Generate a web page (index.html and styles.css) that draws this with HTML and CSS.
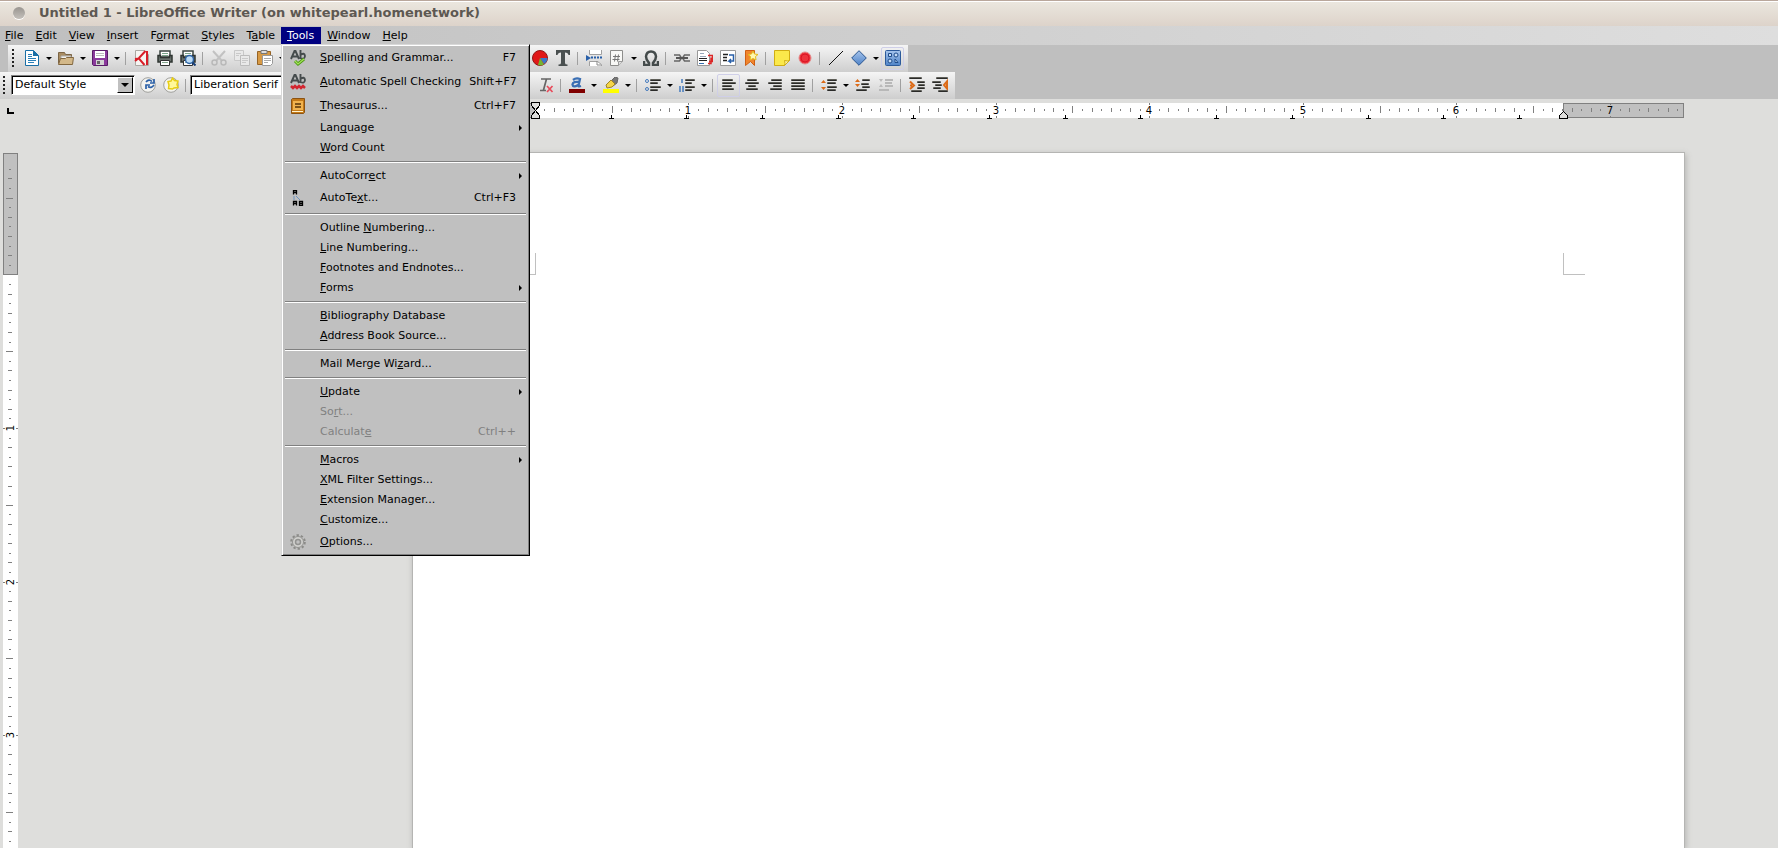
FILE: index.html
```
<!DOCTYPE html>
<html lang="en">
<head>
<meta charset="utf-8">
<title>Untitled 1 - LibreOffice Writer</title>
<link rel="stylesheet" href="styles.css">
</head>
<body>
<svg class="defs" aria-hidden="true">
  <defs>
    <linearGradient id="bar" x1="0" y1="0" x2="0" y2="1"><stop offset="0" stop-color="#77776f"/><stop offset="1" stop-color="#111"/></linearGradient>
    <linearGradient id="blue" x1="0" y1="0" x2="0" y2="1"><stop offset="0" stop-color="#a6c4ec"/><stop offset="1" stop-color="#4f83c8"/></linearGradient>
  </defs>
  <symbol id="new" viewBox="0 0 16 16"><path d="M1.500 .5h8l5 5v10h-13z" fill="#fff" stroke="#1a6fa6"/><path d="M9 0l6 6H9z" fill="#1a6fa6"/><path d="M4 4.500h4M4 6.500h4M4 8.500h8M4 10.500h8M4 12.500h6" stroke="#2a80b8"/></symbol>
  <symbol id="open" viewBox="0 0 16 16"><path d="M.5 13.500v-11h6l1 2h6v3" fill="#a98d63" stroke="#7c6545"/><path d="M3 6h10v5H3z" fill="#f4f2ec" stroke="#aaa"/><path d="M.5 14.500l2-6h5l1-1h7l-1 7z" fill="#d3b889" stroke="#82673f"/></symbol>
  <symbol id="save" viewBox="0 0 16 16"><path d="M.5.500h15v15H1.500l-1-1z" fill="#8b3a9c" stroke="#591c68"/><path d="M3 1h10v7H3z" fill="#fff"/><path d="M4 3.500h8M4 5.500h8" stroke="#bbb"/><path d="M4 10h8v5H4z" fill="#d4d4d4"/><path d="M5 11h3v3H5z" fill="#666"/></symbol>
  <symbol id="pdf" viewBox="0 0 16 16"><path d="M1.500 .5h9l4 4v11h-13z" fill="#f7f5f2" stroke="#aaa7a2"/><path d="M13 1v14M11.500 1L5 8l-4 3M10.500 15L5 8.500 1 9" fill="none" stroke="#d81e28" stroke-width="2"/></symbol>
  <symbol id="print" viewBox="0 0 16 16"><path d="M3 1h10v6H3z" fill="#fff" stroke="#3b4541" stroke-width="1.500"/><path d="M5 3.500h6M5 5.500h6" stroke="#7aa48a"/><path d="M1 5.500h2.500v2h9v-2H15v6.500H1z" fill="#68706c" stroke="#2e3431" stroke-width="1.500"/><path d="M3.500 10.500h9v5h-9z" fill="#fff" stroke="#333"/><path d="M5 12.500h6" stroke="#86a890"/></symbol>
  <symbol id="preview" viewBox="0 0 16 16"><use href="#print"/><circle cx="9.500" cy="9.500" r="4" fill="#bcdcf5" stroke="#2c62a5" stroke-width="1.500"/><path d="M12.500 12.500l3 3" stroke="#173e76" stroke-width="2"/></symbol>
  <symbol id="cut" viewBox="0 0 16 16"><path d="M2 1l9 10M14 1L5 11" stroke="#c2c2c2" stroke-width="2"/><circle cx="3.500" cy="12.500" r="2.500" fill="none" stroke="#b9b9b9" stroke-width="1.500"/><circle cx="12.500" cy="12.500" r="2.500" fill="none" stroke="#b9b9b9" stroke-width="1.500"/></symbol>
  <symbol id="copy" viewBox="0 0 16 16"><path d="M.5.500h9v10h-9z" fill="#e9e9e9" stroke="#c8c8c8"/><path d="M6.500 5.500h9v10h-9z" fill="#e9e9e9" stroke="#bcbcbc"/><path d="M2 3.500h5M2 5.500h3M8 8.500h6M8 10.500h6M8 12.500h4" stroke="#c9c9c9"/></symbol>
  <symbol id="paste" viewBox="0 0 16 16"><path d="M.5 1.500h13v13H.5z" fill="#d79a45" stroke="#976426"/><path d="M4 .5h6v3H4z" fill="#ddd" stroke="#777"/><path d="M5.500 5.500h10v8l-2 2h-8z" fill="#fff" stroke="#999"/><path d="M7 8.500h7M7 10.500h7M7 12.500h4" stroke="#aaa"/></symbol>
  <symbol id="chart" viewBox="0 0 16 16"><circle cx="8" cy="8" r="7.500" fill="#e01818" stroke="#8f1717"/><path d="M8 8h7.500A7.500 7.500 0 0 1 12 14z" fill="#3c78c8"/><path d="M8 8l4 6.500a8 8 0 0 1-6 .5z" fill="#74b531"/></symbol>
  <symbol id="textbox" viewBox="0 0 16 16"><path d="M1 0h14v5h-1.500Q13 2.500 10 2.500V13q0 1.500 2.500 1.500V16h-9v-1.500Q6 14.500 6 13V2.500Q3 2.500 2.500 5H1z" fill="#4a5050"/></symbol>
  <symbol id="pagebreak" viewBox="0 0 16 16"><path d="M3.500 0v4.500h12V0M3.500 16v-4.500h8l4 3V16" fill="#fff" stroke="#a0a0a0"/><path d="M11 11v4h4" fill="none" stroke="#888"/><path d="M5 7.500h11" stroke="#285fa8" stroke-width="2" stroke-dasharray="2 1"/><path d="M0 5l5 3-5 3z" fill="#285fa8"/></symbol>
  <symbol id="field" viewBox="0 0 16 16"><path d="M1.500.500h12v11l-4 4h-8z" fill="#f8f8f6" stroke="#8d8d8b"/><path d="M9.500 15.500v-4h4" fill="#ddd" stroke="#999"/><path d="M6.500 4.500l-1 7M9.500 4.500l-1 7M4 6.500h7M3.500 9.500h7" stroke="#777"/></symbol>
  <symbol id="omega" viewBox="0 0 16 16"><path d="M1 11v4h5v-2Q3 10 3 6.500 3.500 1.500 8 1.500t5 5Q13 10 10 13v2h5v-4" fill="none" stroke="#444b4b" stroke-width="2.500"/></symbol>
  <symbol id="link" viewBox="0 0 16 16"><path d="M0 5h5.500l2 3-2 3H0M16 5h-5.500l-2 3 2 3H16" fill="none" stroke="#666" stroke-width="1.500"/><path d="M2 8h12" stroke="#555" stroke-width="2"/></symbol>
  <symbol id="footnote" viewBox="0 0 16 16"><path d="M.5.500h9l3 3v12H.5z" fill="#fff" stroke="#999"/><path d="M3 3.500h4M3 6.500h6" stroke="#9ab"/><path d="M2 8.500h8M2 10.500h8" stroke="#222"/><path d="M2 13.500h5" stroke="#356eb0"/><path d="M11 5.500h4.500v6H12M11 13.500h3v-6" fill="none" stroke="#dc2727" stroke-width="1.500"/></symbol>
  <symbol id="crossref" viewBox="0 0 16 16"><path d="M.5.500h15v15H.5z" fill="#fff" stroke="#999"/><path d="M3 4.500h5M3 7.500h4M3 10.500h4" stroke="#222" stroke-width="1.500"/><path d="M9 5h4.500v6H9l2-2m-2 2l2 2" fill="none" stroke="#285fa8" stroke-width="1.500"/></symbol>
  <symbol id="bookmark" viewBox="0 0 16 16"><path d="M2.500.500h9v15l-4-4-5 4z" fill="#f0852d" stroke="#cf5f13"/><path d="M10 1l1.500 3 3.500.5-2.500 2 .5 3.500-3-1.500L7 10l.5-3.500-2.500-2L8.500 4z" fill="#fff7b0" stroke="#e3bb1b"/></symbol>
  <symbol id="note" viewBox="0 0 16 16"><path d="M.5.500h15v10l-5 5H.5z" fill="#fbe94b" stroke="#d0ad13"/><path d="M10.500 15.500q1-2 0-5 3 1 5 0z" fill="#fff6a6" stroke="#d0ad13"/></symbol>
  <symbol id="record" viewBox="0 0 16 16"><circle cx="8" cy="8" r="6" fill="#ed333b" stroke="#e58b8b"/><circle cx="8" cy="8" r="4" fill="none" stroke="#d91525"/></symbol>
  <symbol id="line" viewBox="0 0 16 16"><path d="M1 15L15 1" stroke="#111"/></symbol>
  <symbol id="diamond" viewBox="0 0 16 16"><path d="M8 .7L15.300 8 8 15.300.7 8z" fill="url(#blue)" stroke="#28548f"/></symbol>
  <symbol id="draw" viewBox="0 0 16 16"><rect x=".5" y=".5" width="15" height="15" rx="1" fill="url(#blue)" stroke="#2c5a9b"/><path d="M3.500 3.500h3v3h-3zM10 12.500V9l3 3.500z" fill="#c5dbf5" stroke="#1f4c8b"/><circle cx="11" cy="5" r="2" fill="#c5dbf5" stroke="#1f4c8b"/><circle cx="5" cy="11" r="2" fill="#c5dbf5" stroke="#1f4c8b"/></symbol>
  <symbol id="refresh" viewBox="0 0 16 16"><circle cx="8" cy="8" r="7.300" fill="#f3f3f0" stroke="#a0a09c"/><path d="M6 5q3-3.500 6-.5m2-2.500v4h-4M14 8q-3 4-6 1.500M6 12V8h4" fill="none" stroke="#2b60a8" stroke-width="1.700"/></symbol>
  <symbol id="newstyle" viewBox="0 0 16 16"><circle cx="8" cy="8" r="7.300" fill="#f3f3f0" stroke="#a0a09c"/><path d="M9.500 1l2 2.500L15 4l-1 3.500 1 3-4 .5-1.500 1-4-.5L6 8 5 4.500 8 4z" fill="#fff89a" stroke="#e7cd12" stroke-width="1.500"/></symbol>
  <symbol id="clear" viewBox="0 0 16 16"><path d="M3 2h10M8.500 2L5.500 13M2 13.500h6" stroke="#666" stroke-width="1.700"/><path d="M9 9l5.500 6M14.500 9L9 15" stroke="#e84a5a" stroke-width="1.700"/></symbol>
  <symbol id="fontcolor" viewBox="0 0 16 16"><path d="M4 3q3-2.500 7-1L9.500 8.500q-.5 1.500 2.500.5M10.500 5Q4 4 3.500 7.500 4 11 9 8" fill="none" stroke="#3a6fb4" stroke-width="2.300"/><path d="M0 12h16v4H0z" fill="#800000"/></symbol>
  <symbol id="highlight" viewBox="0 0 16 16"><path d="M12 0l3 1-1 5-4 3-3-4z" fill="#777" stroke="#666"/><path d="M8 3l4 4-3 3-5 1-1-3z" fill="#f5d548" stroke="#9e8324"/><path d="M0 12h16v4H0z" fill="#ff0"/></symbol>
  <symbol id="bullets" viewBox="0 0 16 16"><g fill="none" stroke="#4379bd"><circle cx="2" cy="4" r="1.500"/><circle cx="2" cy="12" r="1.500"/></g><g fill="url(#bar)"><rect x="5" y="2" width="11" height="2" rx="1"/><rect x="5" y="5" width="8" height="2" rx="1"/><rect x="5" y="9" width="11" height="2" rx="1"/><rect x="5" y="12" width="8" height="2" rx="1"/></g></symbol>
  <symbol id="numbers" viewBox="0 0 16 16"><path d="M3 2v4M1 9v6M4 9v6" stroke="#4379bd" stroke-width="1.500"/><g fill="url(#bar)"><rect x="6" y="2" width="10" height="2" rx="1"/><rect x="6" y="5" width="7" height="2" rx="1"/><rect x="6" y="9" width="10" height="2" rx="1"/><rect x="6" y="12" width="7" height="2" rx="1"/></g></symbol>
  <symbol id="left" viewBox="0 0 16 16"><g fill="url(#bar)"><rect x="1" y="2" width="11" height="2" rx="1"/><rect x="1" y="5" width="14" height="2" rx="1"/><rect x="1" y="8" width="10" height="2" rx="1"/><rect x="1" y="11" width="12" height="2" rx="1"/></g></symbol>
  <symbol id="center" viewBox="0 0 16 16"><g fill="url(#bar)"><rect x="3" y="2" width="10" height="2" rx="1"/><rect x="1" y="5" width="14" height="2" rx="1"/><rect x="4" y="8" width="8" height="2" rx="1"/><rect x="2" y="11" width="12" height="2" rx="1"/></g></symbol>
  <symbol id="right" viewBox="0 0 16 16"><g fill="url(#bar)"><rect x="4" y="2" width="11" height="2" rx="1"/><rect x="1" y="5" width="14" height="2" rx="1"/><rect x="6" y="8" width="9" height="2" rx="1"/><rect x="3" y="11" width="12" height="2" rx="1"/></g></symbol>
  <symbol id="justify" viewBox="0 0 16 16"><g fill="url(#bar)"><rect x="1" y="2" width="14" height="2" rx="1"/><rect x="1" y="5" width="14" height="2" rx="1"/><rect x="1" y="8" width="14" height="2" rx="1"/><rect x="1" y="11" width="14" height="2" rx="1"/></g></symbol>
  <symbol id="spacing" viewBox="0 0 16 16"><path d="M0 6l2.500-3L5 6zM0 10l2.500 3L5 10z" fill="#dc6b18"/><g fill="url(#bar)"><rect x="6" y="2" width="10" height="2" rx="1"/><rect x="6" y="5" width="9" height="2" rx="1"/><rect x="6" y="9" width="10" height="2" rx="1"/><rect x="6" y="12" width="9" height="2" rx="1"/></g></symbol>
  <symbol id="paraup" viewBox="0 0 16 16"><path d="M0 5l2.500-3L5 5zM0 7l2.500 3L5 7z" fill="#dc6b18"/><g fill="url(#bar)"><rect x="7" y="2" width="8" height="2" rx="1"/><rect x="6" y="6" width="8" height="2" rx="1"/><rect x="1" y="12" width="11" height="2" rx="1"/><rect x="7" y="9" width="8" height="2" rx="1"/></g></symbol>
  <symbol id="paradown" viewBox="0 0 16 16"><path d="M1 2h4L3 5zM1 10h4L3 7z" fill="#bbb"/><g fill="#b8b8b8"><rect x="7" y="2" width="8" height="2"/><rect x="7" y="5" width="7" height="2"/><rect x="7" y="8" width="8" height="2"/><rect x="1" y="12" width="10" height="2"/></g></symbol>
  <symbol id="indent" viewBox="0 0 16 16"><path d="M1 4.500l4 4L1 12M1 8.500h2" fill="none" stroke="#dc6b18" stroke-width="2"/><g fill="url(#bar)"><rect x="0" y="0" width="13" height="2" rx="1"/><rect x="8" y="4" width="8" height="2" rx="1"/><rect x="9" y="7" width="7" height="2" rx="1"/><rect x="8" y="10" width="8" height="2" rx="1"/><rect x="2" y="13" width="11" height="2" rx="1"/></g></symbol>
  <symbol id="outdent" viewBox="0 0 16 16"><path d="M15 4.500L12 8l3 3.500z" fill="#fff" stroke="#dc6b18" stroke-width="2"/><g fill="url(#bar)"><rect x="4" y="0" width="12" height="2" rx="1"/><rect x="0" y="4" width="9" height="2" rx="1"/><rect x="3" y="7" width="7" height="2" rx="1"/><rect x="1" y="10" width="8" height="2" rx="1"/><rect x="6" y="13" width="10" height="2" rx="1"/></g></symbol>
  <symbol id="check" viewBox="0 0 16 16"><path d="M1 9L4.500 1h1L9 9M2.500 6.500h5M10.500 0v9M10.500 5q4-3 4.500 1-.5 4-4.500 2" fill="none" stroke="#454b4c" stroke-width="1.900"/><path d="M5 11l3 3L14 9" fill="none" stroke="#4d9a12" stroke-width="3"/><path d="M5 11l3 3 6-5" fill="none" stroke="#a5e35c" stroke-width="1.200"/></symbol>
  <symbol id="autospell" viewBox="0 0 16 16"><path d="M1 9L4.500 1h1L9 9M2.500 6.500h5M10.500 0v9M10.500 5q4-3 4.500 1-.5 4-4.500 2" fill="none" stroke="#454b4c" stroke-width="1.900"/><path d="M1 12l2 2 2-2 2 2 2-2 2 2 2-2 2 2" fill="none" stroke="#d32630" stroke-width="2.500"/></symbol>
  <symbol id="book" viewBox="0 0 16 16"><path d="M1.500 1.500l1-1h12v14l-1 1h-12z" fill="#c47a18" stroke="#8c5312"/><path d="M3 3h10v9H3z" fill="#f1b34f"/><path d="M5 6h6M5 9h6" stroke="#583408" stroke-width="1.500"/><path d="M2 13.500h11" stroke="#fff3cf"/></symbol>
  <symbol id="autotext" viewBox="0 0 16 16"><path d="M3.500 4.500V.5h3v4M3.500 2.500h3M3.500 15.500v-4h3v4M3.500 13.500h3M9.500 11.500v4h3v-4zM9.500 13.500h3" fill="none" stroke="#000" stroke-width="1.300"/><path d="M4 6v4M6 6l4 4" stroke="#6f94c0"/></symbol>
  <symbol id="gear" viewBox="0 0 16 16"><circle cx="8" cy="8" r="6.800" fill="none" stroke="#8b8b88" stroke-width="2" stroke-dasharray="2.340 2"/><circle cx="8" cy="8" r="5.500" fill="#d0d0cd" stroke="#929290"/><circle cx="8" cy="8" r="2.500" fill="#c0c0c0" stroke="#929290" stroke-width="1.500"/></symbol>
</svg>

<header class="titlebar"><span class="window-dot"></span><h1>Untitled 1 - LibreOffice Writer (on whitepearl.homenetwork)</h1></header>

<nav class="menubar">
  <button><u>F</u>ile</button>
  <button><u>E</u>dit</button>
  <button><u>V</u>iew</button>
  <button><u>I</u>nsert</button>
  <button>F<u>o</u>rmat</button>
  <button><u>S</u>tyles</button>
  <button>T<u>a</u>ble</button>
  <div class="open-menu">
    <button class="active"><u>T</u>ools</button>
    <div class="menu" role="menu">
      <button class="tall"><svg><use href="#check"/></svg><span><u>S</u>pelling and Grammar...</span><kbd>F7</kbd></button>
      <button class="tall"><svg><use href="#autospell"/></svg><span><u>A</u>utomatic Spell Checking</span><kbd>Shift+F7</kbd></button>
      <button class="tall"><svg><use href="#book"/></svg><span><u>T</u>hesaurus...</span><kbd>Ctrl+F7</kbd></button>
      <button class="sub"><span>Lan<u>g</u>uage</span></button>
      <button><span><u>W</u>ord Count</span></button>
      <hr>
      <button class="sub"><span>AutoCorr<u>e</u>ct</span></button>
      <button class="tall"><svg><use href="#autotext"/></svg><span>AutoTe<u>x</u>t...</span><kbd>Ctrl+F3</kbd></button>
      <hr>
      <button><span>Outline <u>N</u>umbering...</span></button>
      <button><span><u>L</u>ine Numbering...</span></button>
      <button><span><u>F</u>ootnotes and Endnotes...</span></button>
      <button class="sub"><span><u>F</u>orms</span></button>
      <hr>
      <button><span><u>B</u>ibliography Database</span></button>
      <button><span><u>A</u>ddress Book Source...</span></button>
      <hr>
      <button><span>Mail Merge Wi<u>z</u>ard...</span></button>
      <hr>
      <button class="sub"><span><u>U</u>pdate</span></button>
      <button disabled><span>So<u>r</u>t...</span></button>
      <button disabled><span>Calculat<u>e</u></span><kbd>Ctrl++</kbd></button>
      <hr>
      <button class="sub"><span><u>M</u>acros</span></button>
      <button><span><u>X</u>ML Filter Settings...</span></button>
      <button><span><u>E</u>xtension Manager...</span></button>
      <button><span><u>C</u>ustomize...</span></button>
      <button class="tall"><svg><use href="#gear"/></svg><span><u>O</u>ptions...</span></button>
    </div>
  </div>
  <button><u>W</u>indow</button>
  <button><u>H</u>elp</button>
</nav>

<div class="toolbars">
  <div class="toolbar standard">
    <i class="grip"></i>
    <button class="tool" aria-label="New"><svg><use href="#new"/></svg></button><button class="drop" aria-label="New options"></button>
    <button class="tool" aria-label="Open"><svg><use href="#open"/></svg></button><button class="drop" aria-label="Open options"></button>
    <button class="tool" aria-label="Save"><svg><use href="#save"/></svg></button><button class="drop" aria-label="Save options"></button>
    <i class="sep"></i>
    <button class="tool" aria-label="Export as PDF"><svg><use href="#pdf"/></svg></button>
    <button class="tool" aria-label="Print"><svg><use href="#print"/></svg></button>
    <button class="tool" aria-label="Print preview"><svg><use href="#preview"/></svg></button>
    <i class="sep"></i>
    <button class="tool" aria-label="Cut"><svg><use href="#cut"/></svg></button>
    <button class="tool" aria-label="Copy"><svg><use href="#copy"/></svg></button>
    <button class="tool" aria-label="Paste"><svg><use href="#paste"/></svg></button><button class="drop" aria-label="Paste options"></button>
    <i class="space"></i>
    <button class="tool" aria-label="Chart"><svg><use href="#chart"/></svg></button>
    <button class="tool" aria-label="Text box"><svg><use href="#textbox"/></svg></button>
    <i class="sep"></i>
    <button class="tool" aria-label="Page break"><svg><use href="#pagebreak"/></svg></button>
    <button class="tool" aria-label="Field"><svg><use href="#field"/></svg></button><button class="drop" aria-label="Field options"></button>
    <button class="tool" aria-label="Special character"><svg><use href="#omega"/></svg></button>
    <i class="sep"></i>
    <button class="tool" aria-label="Hyperlink"><svg><use href="#link"/></svg></button>
    <button class="tool" aria-label="Footnote"><svg><use href="#footnote"/></svg></button>
    <button class="tool" aria-label="Cross-reference"><svg><use href="#crossref"/></svg></button>
    <button class="tool" aria-label="Bookmark"><svg><use href="#bookmark"/></svg></button>
    <i class="sep"></i>
    <button class="tool" aria-label="Comment"><svg><use href="#note"/></svg></button>
    <button class="tool" aria-label="Record changes"><svg><use href="#record"/></svg></button>
    <i class="sep"></i>
    <button class="tool" aria-label="Line"><svg><use href="#line"/></svg></button>
    <button class="tool" aria-label="Shapes"><svg><use href="#diamond"/></svg></button><button class="drop" aria-label="Shape options"></button>
    <button class="tool on" aria-label="Draw functions"><svg><use href="#draw"/></svg></button>
  </div>
  <div class="toolbar formatting">
    <i class="grip"></i>
    <div class="combo"><input value="Default Style" aria-label="Paragraph style"><button aria-label="Show styles"></button></div>
    <button class="tool" aria-label="Update style"><svg><use href="#refresh"/></svg></button>
    <button class="tool" aria-label="New style"><svg><use href="#newstyle"/></svg></button>
    <i class="sep"></i>
    <div class="combo font"><input value="Liberation Serif" aria-label="Font name"><button aria-label="Show fonts"></button></div>
    <i class="space"></i>
    <button class="tool" aria-label="Clear formatting"><svg><use href="#clear"/></svg></button>
    <i class="sep"></i>
    <button class="tool" aria-label="Font color"><svg><use href="#fontcolor"/></svg></button><button class="drop" aria-label="Font colors"></button>
    <button class="tool" aria-label="Highlighting"><svg><use href="#highlight"/></svg></button><button class="drop" aria-label="Highlight colors"></button>
    <i class="sep"></i>
    <button class="tool" aria-label="Bullets"><svg><use href="#bullets"/></svg></button><button class="drop" aria-label="Bullet styles"></button>
    <button class="tool" aria-label="Numbering"><svg><use href="#numbers"/></svg></button><button class="drop" aria-label="Numbering styles"></button>
    <i class="sep"></i>
    <button class="tool on" aria-label="Align left"><svg><use href="#left"/></svg></button>
    <button class="tool" aria-label="Center"><svg><use href="#center"/></svg></button>
    <button class="tool" aria-label="Align right"><svg><use href="#right"/></svg></button>
    <button class="tool" aria-label="Justify"><svg><use href="#justify"/></svg></button>
    <i class="sep"></i>
    <button class="tool" aria-label="Line spacing"><svg><use href="#spacing"/></svg></button><button class="drop" aria-label="Line spacing options"></button>
    <button class="tool" aria-label="Increase paragraph spacing"><svg><use href="#paraup"/></svg></button>
    <button class="tool" aria-label="Decrease paragraph spacing"><svg><use href="#paradown"/></svg></button>
    <i class="sep"></i>
    <button class="tool" aria-label="Increase indent"><svg><use href="#indent"/></svg></button>
    <button class="tool" aria-label="Decrease indent"><svg><use href="#outdent"/></svg></button>
  </div>
</div>

<main class="workspace">
  <div class="ruler-row">
    <i class="tab-type"></i>
    <svg class="ruler-h" id="ruler-h" shape-rendering="crispEdges"></svg>
  </div>
  <div class="canvas">
    <svg class="ruler-v" id="ruler-v" shape-rendering="crispEdges"></svg>
    <article class="page"><i class="corner start"></i><i class="corner end"></i></article>
  </div>
</main>
<script src="rulers.js"></script>
</body>
</html>
```
FILE: rulers.js
```
const NS = "http://www.w3.org/2000/svg";
const INCH = 153.6;

function add(svg, name, attrs, text) {
  const el = document.createElementNS(NS, name);
  for (const key in attrs) el.setAttribute(key, attrs[key]);
  if (text) el.textContent = text;
  svg.appendChild(el);
}

// Sixteenth-of-an-inch marks; whole inches carry a number between two short dashes.
function drawMarks(svg, origin, end, vertical) {
  const from = Math.ceil(-origin / INCH * 16) + 1;
  for (let n = from; origin + n * INCH / 16 < end - 3; n++) {
    if (n === 0) continue;
    const at = Math.round(origin + n * INCH / 16);
    const mark = (cross, length) => add(svg, "rect", vertical
      ? { x: cross, y: at, width: length, height: 1, fill: "#808080" }
      : { x: at, y: cross, width: 1, height: length, fill: "#808080" });
    if (n % 16 === 0) {
      mark(0, 2);
      mark(13, 2);
      const label = { "text-anchor": "middle", class: "ruler-number" };
      if (vertical) label.transform = `translate(11 ${at}) rotate(-90)`;
      else { label.x = at; label.y = 11; }
      add(svg, "text", label, String(Math.abs(n / 16)));
    } else if (n % 8 === 0) mark(3, 7);
    else if (n % 2 === 0) mark(5, 4);
    else mark(6, 2);
  }
}

const h = document.getElementById("ruler-h");
add(h, "rect", { x: 0, y: 0, width: 1271, height: 15, fill: "#fff" });
add(h, "rect", { x: 0.5, y: 0.5, width: 122, height: 14, fill: "#c0c0c0", stroke: "#808080" });
add(h, "rect", { x: 1150.5, y: 0.5, width: 120, height: 14, fill: "#c0c0c0", stroke: "#808080" });
drawMarks(h, 121.8, 1271, false);
for (let i = 1; i <= 13; i++) {
  const x = Math.round(121.8 + i * 75.7);
  add(h, "path", { d: `M${x - 2} 15.5h5M${x + 0.5} 12v3`, stroke: "#000" });
}
add(h, "path", { d: "M118.500 -.5h8v3l-4 5 4 5v3h-8v-3l4-5-4-5z", fill: "#dededc", stroke: "#000" });
add(h, "path", { d: "M1146.500 15.500v-3l4-4 4 4v3z", fill: "#dededc", stroke: "#000" });

const v = document.getElementById("ruler-v");
const length = v.clientHeight || v.getBoundingClientRect().height;
add(v, "rect", { x: 0, y: 0, width: 15, height: length, fill: "#fff" });
add(v, "rect", { x: 0.5, y: 0.5, width: 14, height: 121, fill: "#c0c0c0", stroke: "#808080" });
drawMarks(v, 121.4, length, true);
```
FILE: styles.css
```
* { box-sizing: border-box; }
body {
  margin: 0;
  height: 100vh;
  display: flex;
  flex-direction: column;
  overflow: hidden;
  background: #dededc;
  color: #000;
  font: 11px/16px "DejaVu Sans", sans-serif;
}
button, input { font: inherit; color: inherit; }
button { margin: 0; padding: 0; border: 0; background: none; }
u { text-decoration: underline 1px; text-underline-offset: 1px; text-decoration-skip-ink: none; }
.defs { position: absolute; width: 0; height: 0; }

.titlebar {
  flex: none;
  display: flex;
  align-items: center;
  gap: 14px;
  height: 26px;
  padding: 0 0 2px 13px;
  border-top: 1px solid #b9a79c;
  box-shadow: inset 0 1px #fff;
  background: linear-gradient(#ebe7df, #ddd3ca);
}
.titlebar h1 { margin: 0; font-size: 13px; line-height: 16px; color: #5d5852; }
.window-dot { width: 12px; height: 12px; border-radius: 50%; background: linear-gradient(#999590, #c4c0bb); box-shadow: 0 1px #fff; }

.menubar {
  flex: none;
  display: flex;
  height: 19px;
  padding: 1px 0 0;
  background: linear-gradient(90deg, #bfbfbf, #dedede);
}
.menubar > button { height: 17px; padding: 0 7px 0 5px; }
.menubar > button:nth-child(7) { padding-right: 6px; }
.open-menu { position: relative; }
.open-menu > button { height: 17px; padding: 0 7px 0 6px; }
.open-menu > .active { background: #000080; color: #fff; }
.open-menu ~ button { padding: 0 6px; }

.menu {
  position: absolute;
  z-index: 2;
  top: 17px;
  left: 0;
  width: 249px;
  padding: 0 1px 2px;
  border: 1px solid;
  border-color: #d8d8d8 #000 #000 #d8d8d8;
  box-shadow: inset 1px 1px #fff, inset -1px -1px #808080;
  background: #c0c0c0;
}
.menu button {
  display: grid;
  grid-template-columns: 22px 1fr auto;
  column-gap: 8px;
  align-items: center;
  width: 100%;
  height: 20px;
  padding: 2px 12px 0 7px;
  text-align: left;
  white-space: nowrap;
}
.menu button > span { grid-column: 2; }
.menu .tall { height: 24px; }
.menu svg { width: 16px; height: 16px; }
.menu kbd { font: inherit; }
.menu button:disabled { color: #808080; }
.menu .sub { padding-right: 6px; }
.menu .sub::after { content: ""; border: 3px solid transparent; border-left-color: #000; border-right: 0; }
.menu hr { height: 2px; margin: 4px 2px 2px; border: 0; border-top: 1px solid #808080; background: #fff; }

.toolbars { flex: none; display: flex; flex-direction: column; align-items: flex-start; background: #bfbfbf; }
.toolbar { display: flex; align-items: center; height: 27px; padding: 0 4px 1px 0; background: linear-gradient(#f5f5f5, #cecece); }
.standard { margin-left: 8px; }
.grip { width: 2px; height: 19px; background: repeating-linear-gradient(#222 0 2px, transparent 2px 4px); }
.standard .grip { margin: 0 6px 0 4px; }
.formatting .grip { margin: 0 6px 0 3px; }
.tool { display: grid; place-items: center; flex: none; width: 23px; height: 23px; border: 1px solid transparent; }
.tool.on { border-color: #cfcfe8; border-radius: 2px; }
.tool svg { width: 16px; height: 16px; }
.drop { display: grid; place-items: center; width: 11px; height: 23px; }
.drop::before, .combo button::before { content: ""; border: 3px solid transparent; border-top-color: #000; border-bottom: 0; }
.sep { width: 1px; height: 13px; margin: 0 4px 0 3px; background: #a0a0a0; }
.standard .space { width: 241px; }
.formatting .space { width: 185px; }
.combo {
  display: flex;
  width: 124px;
  height: 20px;
  margin-right: 1px;
  padding: 1px;
  border: 1px solid;
  border-color: #808080 #fff #fff #808080;
  background: #fff;
  box-shadow: inset 1px 1px #000;
}
.combo.font { width: 158px; }
.combo input { flex: 1; min-width: 0; padding: 0 2px; border: 0; background: none; outline: 0; }
.combo button { display: grid; place-items: center; width: 16px; border: 1px solid; border-color: #fff #000 #000 #fff; background: #c0c0c0; }
.combo button::before { border-width: 4px 4px 0; }

.workspace { flex: 1; min-height: 0; display: flex; flex-direction: column; overflow: hidden; }
.ruler-row { flex: none; display: flex; height: 53px; padding: 4px 0 0 7px; }
.tab-type { width: 7px; height: 6px; margin-top: 5px; border: solid #000; border-width: 0 0 2px 2px; }
.ruler-h { flex: none; width: 1272px; height: 17px; margin-left: 399px; overflow: visible; }
.ruler-number { font: 10px "DejaVu Sans", sans-serif; }
.canvas { flex: 1; min-height: 0; display: flex; padding-left: 3px; }
.ruler-v { flex: none; width: 15px; height: calc(100% - 1px); margin-top: 1px; }
.page {
  display: flex;
  justify-content: space-between;
  flex: none;
  width: 1273px;
  margin-left: 394px;
  padding: 100px 99px 0 101px;
  border: 1px solid #b5b5b3;
  border-bottom: 0;
  background: #fff;
  box-shadow: 1px 2px 6px #b4b4b2;
}
.corner { width: 22px; height: 22px; border: solid #c0c0c0; }
.corner.start { border-width: 0 1px 1px 0; }
.corner.end { border-width: 0 0 1px 1px; }
```
